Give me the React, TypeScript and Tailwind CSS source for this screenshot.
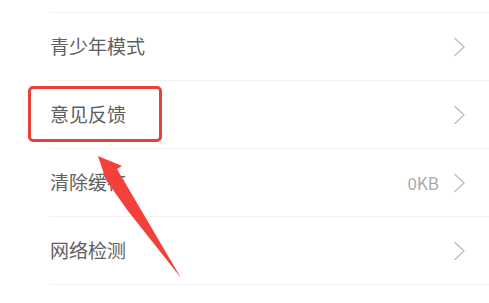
const rows = [
  { label: "青少年模式" },
  { label: "意见反馈" },
  { label: "清除缓存", value: "0KB" },
  { label: "网络检测" },
];

function Chevron() {
  return (
    <svg width="13" height="20" viewBox="0 0 13 20" fill="none">
      <path d="M2 1.5 L11 10 L2 18.5" stroke="#bdbdbd" strokeWidth="1.4" strokeLinecap="round" strokeLinejoin="round" />
    </svg>
  );
}

export default function App() {
  return (
    <div
      className="relative h-[303px] w-[489px] overflow-hidden bg-white pt-[12px]"
      style={{ fontFamily: '"Noto Sans CJK SC", "Noto Sans", sans-serif' }}
    >
      <div className="ml-[50px] border-t border-[#f2f2f2]">
        {rows.map((row) => (
          <div
            key={row.label}
            className="flex h-[68px] items-center justify-between border-b border-[#f2f2f2] pr-[23px]"
          >
            <span className="text-[19px] text-[#606060]">{row.label}</span>
            <div className="flex items-center gap-[14px]">
              {row.value && <span className="text-[17px] text-[#aaaaaa]">{row.value}</span>}
              <Chevron />
            </div>
          </div>
        ))}
      </div>

      {/* highlight box */}
      <div className="absolute left-[28px] top-[86px] h-[56px] w-[134px] rounded-[5px] border-[3px] border-[#e8413a]" />

      {/* arrow */}
      <svg className="absolute left-0 top-0" width="489" height="303" viewBox="0 0 489 303">
        <polygon points="98,156 122,166 117,169 181,278 128,211 106,180" fill="#f2403a" />
      </svg>
    </div>
  );
}
